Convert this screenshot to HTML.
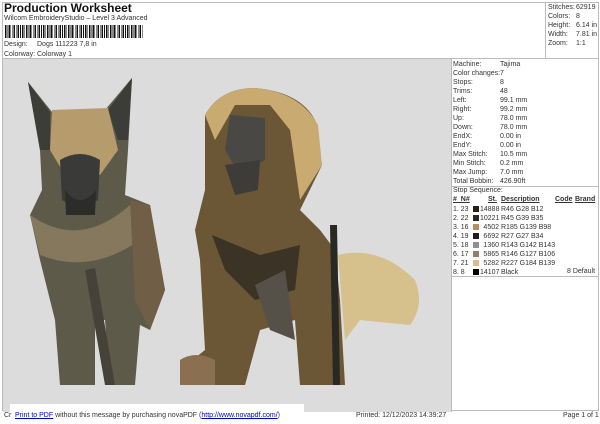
<!DOCTYPE html>
<html><head><meta charset="utf-8"><style>
*{margin:0;padding:0;box-sizing:border-box}
body{width:600px;height:424px;background:#fff;font-family:"Liberation Sans",sans-serif;position:relative;overflow:hidden;color:#222}
.a{position:absolute;white-space:nowrap}
.s{font-size:7px;color:#333}
</style></head><body>
<div class="a" style="left:2px;top:2px;width:597px;height:409px;border:1px solid #bbb"></div>
<div class="a" style="left:2px;top:58px;width:597px;border-top:1px solid #bbb"></div>
<div class="a" style="left:545px;top:2px;height:57px;border-left:1px solid #bbb"></div>
<div class="a" style="left:4px;top:1px;font-size:12px;font-weight:bold;color:#111">Production Worksheet</div>
<div class="a s" style="left:4px;top:15px">Wilcom EmbroideryStudio – Level 3 Advanced</div>
<div class="a" style="left:5px;top:25px;width:138px;height:13px;background:repeating-linear-gradient(90deg,#111 0 1.5px,#fff 1.5px 2.6px,#111 2.6px 3.3px,#fff 3.3px 4.2px)"></div>
<div class="a s" style="left:4px;top:41px">Design:</div><div class="a s" style="left:37px;top:41px">Dogs 111223 7,8 in</div>
<div class="a s" style="left:4px;top:51px">Colorway:</div><div class="a s" style="left:37px;top:51px">Colorway 1</div>
<div class="a s" style="left:548px;top:3px;line-height:9px">Stitches:<br>Colors:<br>Height:<br>Width:<br>Zoom:</div>
<div class="a s" style="left:576px;top:3px;line-height:9px">62919<br>8<br>6.14 in<br>7.81 in<br>1:1</div>
<div class="a" style="left:3px;top:59px;width:448px;height:353px;background:#dcdcdc"></div>
<div class="a" style="left:451px;top:59px;height:353px;border-left:1px solid #bbb"></div>
<svg class="a" style="left:0;top:0" width="451" height="412">
<!-- left dog -->
<path d="M28 82 L52 112 L105 110 L132 78 L128 150 L125 195 L150 205 L165 290 L150 330 L140 325 L135 385 L110 385 L105 320 L95 320 L95 385 L60 385 L55 320 L40 260 L30 215 L42 190 L40 150 Z" fill="#5e5a4a"/>
<path d="M28 82 L50 112 L50 150 L40 150 Z M132 78 L108 110 L118 140 L128 140 Z" fill="#3c3c38"/>
<path d="M52 110 L108 108 L118 150 L100 175 L65 175 L50 150 Z" fill="#b69c6c"/>
<path d="M60 160 Q80 148 100 160 L98 200 Q80 212 62 200 Z" fill="#3a3a38"/>
<path d="M65 190 Q80 210 96 190 L95 215 L66 215 Z" fill="#2c2c2a"/>
<path d="M30 215 Q80 250 130 205 L140 240 Q90 275 40 255 Z" fill="#85785c"/>
<path d="M130 200 L150 205 L165 290 L150 330 L135 300 Z" fill="#705e46"/>
<path d="M85 270 L95 268 L115 385 L105 385 Z" fill="#45423a"/>
<!-- right dog -->
<path d="M205 115 Q220 88 255 88 Q300 92 315 120 L322 165 L300 210 L320 230 L335 250 L340 300 L345 385 L300 385 L295 320 L260 330 L245 385 L185 385 L180 370 L205 350 L200 260 L195 230 L205 190 Z" fill="#6b5636"/>
<path d="M205 115 Q220 88 255 88 Q300 92 318 125 L322 165 L300 200 L290 130 L270 105 L235 105 L215 140 Z" fill="#c9aa70"/>
<path d="M230 115 L265 118 L265 160 L240 175 L225 150 Z" fill="#4a4844"/>
<path d="M225 165 L260 160 L258 190 L235 195 Z" fill="#3e3c38"/>
<path d="M212 235 L260 255 L300 245 L295 290 L255 300 L225 270 Z" fill="#3a3326"/>
<path d="M255 285 L285 270 L295 340 L270 330 Z" fill="#555048"/>
<path d="M338 255 Q380 245 415 280 Q425 305 410 325 L360 320 L345 340 Z" fill="#d6c08c"/>
<path d="M330 225 L337 225 L340 385 L333 385 Z" fill="#2a2822"/>
<path d="M180 360 Q195 350 215 360 L215 385 L180 385 Z" fill="#8a7050"/>
</svg>
<div class="a s" style="left:453px;top:60px;line-height:9px">Machine:<br>Color changes:<br>Stops:<br>Trims:<br>Left:<br>Right:<br>Up:<br>Down:<br>EndX:<br>EndY:<br>Max Stitch:<br>Min Stitch:<br>Max Jump:<br>Total Bobbin:</div>
<div class="a s" style="left:500px;top:60px;line-height:9px">Tajima<br>7<br>8<br>48<br>99.1 mm<br>99.2 mm<br>78.0 mm<br>78.0 mm<br>0.00 in<br>0.00 in<br>10.5 mm<br>0.2 mm<br>7.0 mm<br>426.90ft</div>
<div class="a" style="left:451px;top:186px;width:148px;border-top:1px solid #bbb"></div>
<div class="a s" style="left:453px;top:187px">Stop Sequence:</div>
<div class="a s" style="left:453px;top:196px;font-weight:bold;text-decoration:underline">#&nbsp;&nbsp;N#</div>
<div class="a s" style="left:488px;top:196px;font-weight:bold;text-decoration:underline">St.</div>
<div class="a s" style="left:501px;top:196px;font-weight:bold;text-decoration:underline">Description</div>
<div class="a s" style="left:555px;top:196px;font-weight:bold;text-decoration:underline">Code</div>
<div class="a s" style="left:575px;top:196px;font-weight:bold;text-decoration:underline">Brand</div>
<div class="a s" style="left:453px;top:205px;line-height:9px">1. 23<br>2. 22<br>3. 16<br>4. 19<br>5. 18<br>6. 17<br>7. 21<br>8. 8</div>
<div class="a" style="left:473px;top:206px;width:6px;height:69px;background:linear-gradient(#2e1c0c 0 6px,transparent 6px 9px,#2d2723 9px 15px,transparent 15px 18px,#b98b62 18px 24px,transparent 24px 27px,#1b1b22 27px 33px,transparent 33px 36px,#8f8e8f 36px 42px,transparent 42px 45px,#927f6a 45px 51px,transparent 51px 54px,#e3b88b 54px 60px,transparent 60px 63px,#000 63px 69px)"></div>
<div class="a s" style="left:480px;top:205px;line-height:9px;text-align:right;width:19px">14888<br>10221<br>4502<br>6692<br>1360<br>5865<br>5282<br>14107</div>
<div class="a s" style="left:501px;top:205px;line-height:9px">R46 G28 B12<br>R45 G39 B35<br>R185 G139 B98<br>R27 G27 B34<br>R143 G142 B143<br>R146 G127 B106<br>R227 G184 B139<br>Black</div>
<div class="a s" style="left:567px;top:268px">8 Default</div>
<div class="a" style="left:451px;top:276px;width:148px;border-top:1px solid #bbb"></div>
<div class="a" style="left:10px;top:404px;width:294px;height:9px;background:#fff"></div>
<div class="a s" style="left:4px;top:412px">Cr</div>
<div class="a s" style="left:15px;top:412px"><span style="color:#00c;text-decoration:underline">Print to PDF</span> without this message by purchasing novaPDF (<span style="color:#00c;text-decoration:underline">http://www.novapdf.com/</span>)</div>
<div class="a s" style="left:356px;top:412px">Printed: 12/12/2023 14:39:27</div>
<div class="a s" style="left:563px;top:412px">Page 1 of 1</div>
</body></html>
